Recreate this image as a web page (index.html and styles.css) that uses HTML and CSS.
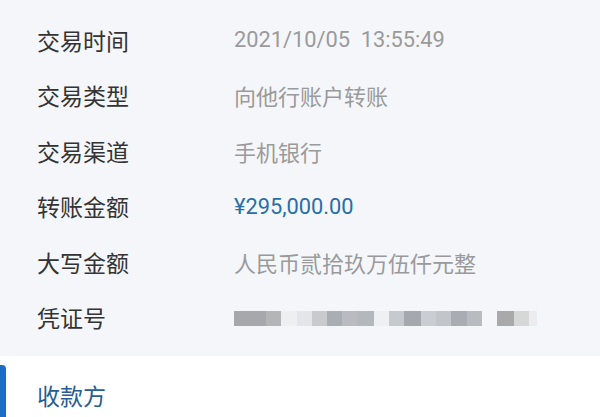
FILE: index.html
```html
<!DOCTYPE html>
<html lang="zh-CN">
<head>
    <meta charset="UTF-8">
    <meta name="viewport" content="width=device-width, initial-scale=1.0">
    <title>交易详情</title>
    <link rel="stylesheet" href="styles.css">
</head>
<body>
    <div class="detail">
        <div class="row"><span class="label">交易时间</span><span class="value num">2021/10/05&nbsp;&nbsp;13:55:49</span></div>
        <div class="row"><span class="label">交易类型</span><span class="value">向他行账户转账</span></div>
        <div class="row"><span class="label">交易渠道</span><span class="value">手机银行</span></div>
        <div class="row"><span class="label">转账金额</span><span class="value num amount">¥295,000.00</span></div>
        <div class="row"><span class="label">大写金额</span><span class="value">人民币贰拾玖万伍仟元整</span></div>
        <div class="row"><span class="label">凭证号</span><span class="value"><span class="blur"></span></span></div>
    </div>
    <div class="section">
        <div class="section-title">收款方</div>
    </div>
</body>
</html>
```

FILE: styles.css
```css
body {
    margin: 0;
    background-color: #ffffff;
    font-family: "Noto Sans CJK SC", "Noto Sans", sans-serif;
    overflow: hidden;
}
.detail {
    background-color: #f4f6fa;
    padding: 12px 0 11px 37px;
}
.row {
    display: flex;
    align-items: center;
    height: 55.5px;
}
.label {
    width: 197px;
    font-size: 23px;
    color: #333333;
}
.value {
    font-size: 22px;
    color: #9a9a9a;
}
.num {
    font-family: Roboto, "Noto Sans CJK SC", sans-serif;
    font-size: 21.8px;
}
.amount {
    color: #2a6ea6;
}
.blur {
    display: block;
    width: 303px;
    height: 15px;
    margin-top: 3px;
    background: linear-gradient(to right,
        #a7a8ac 0, #a7a8ac 32px,
        #b4b5b7 32px, #b4b5b7 47px,
        #eeeff1 47px, #eeeff1 63px,
        #e3e5e8 63px, #e3e5e8 78px,
        #c8cacd 78px, #c8cacd 93px,
        #aaadb3 93px, #aaadb3 108px,
        #b9bbc0 108px, #b9bbc0 123px,
        #b4b7bc 123px, #b4b7bc 140px,
        #eff0f2 140px, #eff0f2 155px,
        #c6c9cd 155px, #c6c9cd 170px,
        #a5a8af 170px, #a5a8af 187px,
        #cacdd2 187px, #cacdd2 202px,
        #c2c5ca 202px, #c2c5ca 217px,
        #a9acb2 217px, #a9acb2 233px,
        #b8bbc0 233px, #b8bbc0 248px,
        transparent 248px, transparent 263px,
        #a9a9a9 263px, #a9a9a9 280px,
        #d6d7d7 280px, #d6d7d7 295px,
        #ececec 295px, #ececec 303px);
}
.section {
    position: relative;
    height: 61px;
    padding: 22px 0 0 37px;
    box-sizing: border-box;
}
.section::before {
    content: "";
    position: absolute;
    left: 0;
    top: 9px;
    bottom: 0;
    width: 6px;
    background-color: #1b6cc2;
    border-radius: 0 4px 0 0;
}
.section-title {
    font-size: 23px;
    color: #275e93;
    line-height: 34px;
}
```
